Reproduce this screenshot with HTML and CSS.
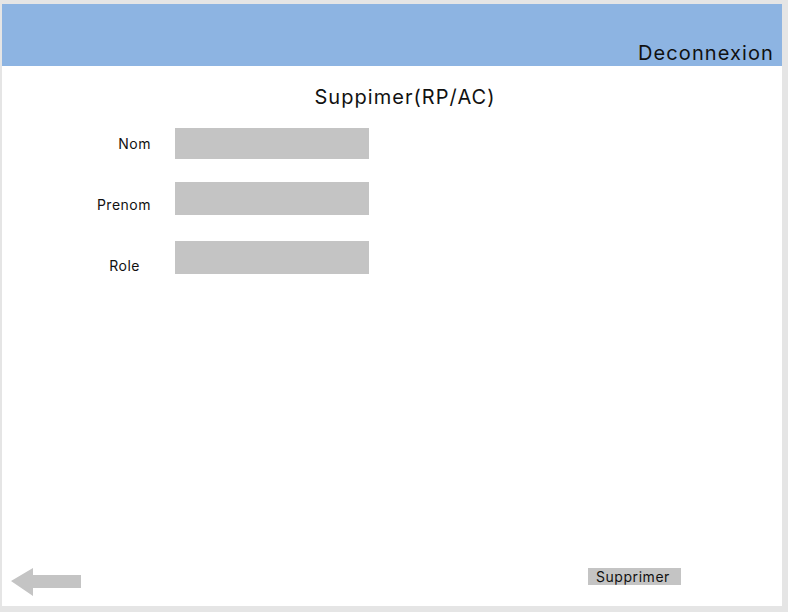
FILE: index.html
```html
<!DOCTYPE html>
<html lang="fr">
<head>
<meta charset="utf-8">
<title>Suppimer(RP/AC)</title>
<link rel="stylesheet" href="styles.css">
</head>
<body>
<div class="panel">
  <header class="header">
    <span class="logout">Deconnexion</span>
  </header>
  <main class="content">
    <h1 class="title">Suppimer(RP/AC)</h1>
    <form class="form">
      <div class="row row-nom">
        <label class="label">Nom</label>
        <div class="field"></div>
      </div>
      <div class="row row-prenom">
        <label class="label">Prenom</label>
        <div class="field"></div>
      </div>
      <div class="row row-role">
        <label class="label label-role">Role</label>
        <div class="field"></div>
      </div>
    </form>
  </main>
  <footer class="footer">
    <svg class="back" width="70" height="28" viewBox="0 0 70 28"><polygon points="0,13 22,0 22,7 70,7 70,20 22,20 22,28" fill="#c4c4c4"/></svg>
    <button class="btn" type="button">Supprimer</button>
  </footer>
</div>
</body>
</html>
```
FILE: styles.css
```css
html, body {
  margin: 0;
  padding: 0;
}
body {
  background: #e5e5e5;
  font-family: Inter, "Open Sans", sans-serif;
  color: #111;
}
.panel {
  margin: 4px 0 0 2px;
  width: 780px;
  height: 602px;
  background: #fff;
  display: flex;
  flex-direction: column;
}
.header {
  height: 62px;
  background: #8db4e2;
  display: flex;
  justify-content: flex-end;
  align-items: flex-end;
  padding-right: 8px;
}
.logout {
  font-size: 20px;
  line-height: 24px;
  letter-spacing: 1.1px;
  margin-bottom: 1px;
}
.content {
  flex: 1;
}
.title {
  margin: 18px 0 0 0;
  padding-left: 26px;
  text-align: center;
  font-size: 20px;
  font-weight: 400;
  line-height: 26px;
  letter-spacing: 1.05px;
}
.form {
  margin-top: 18px;
  display: flex;
  flex-direction: column;
}
.row {
  display: flex;
  align-items: flex-start;
}
.label {
  width: 149px;
  text-align: right;
  font-size: 14px;
  line-height: 18px;
  letter-spacing: 0.5px;
}
.field {
  margin-left: 24px;
  width: 194px;
  height: 33px;
  background: #c4c4c4;
}
.row-nom .field { height: 31px; }
.row-nom .label { margin-top: 7px; }
.row-prenom { margin-top: 23px; }
.row-prenom .label { margin-top: 14px; }
.row-role { margin-top: 26px; }
.row-role .label { margin-top: 16px; }
.label-role { padding-right: 11px; width: 138px; }
.footer {
  display: flex;
  align-items: flex-start;
  justify-content: space-between;
  padding: 0 101px 10px 9px;
}
.back {
  display: block;
}
.btn {
  border: 0;
  margin: 0;
  background: #c4c4c4;
  width: 93px;
  height: 17px;
  padding: 0 0 0 8px;
  text-align: left;
  font-family: inherit;
  font-size: 14px;
  line-height: 17px;
  letter-spacing: 0.55px;
  color: #111;
}
```
